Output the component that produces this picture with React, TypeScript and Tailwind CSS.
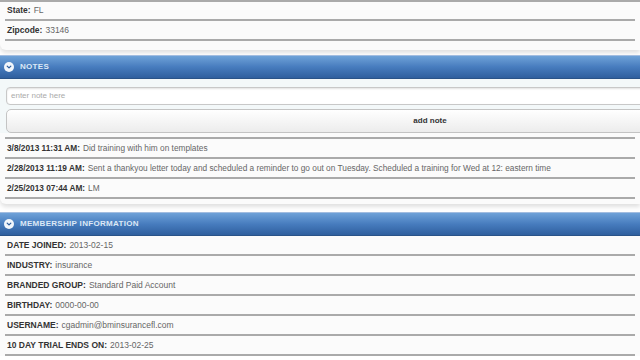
import React from "react";

const font = "font-['Liberation_Sans',Arial,sans-serif]";

function Row({ label, value }: { label: string; value: string }) {
  return (
    <div className="h-[20px] flex items-center pl-[2px] border-b-2 border-[#aaaaaa] text-[8.5px] leading-none whitespace-nowrap">
      <span className="font-bold text-[#333]">{label}:</span>
      <span className="ml-[3px] text-[#666]">{value}</span>
    </div>
  );
}

function Header({ title }: { title: string }) {
  return (
    <div className="h-[24px] flex items-center pl-[4px] border-t border-[#a3bde0] border-b border-b-[#2a5388] bg-gradient-to-b from-[#6fa2d8] via-[#477cbe] to-[#2f5f9e]">
      <span className="w-[10px] h-[10px] rounded-full bg-[#f2f6fb] flex items-center justify-center">
        <svg width="6" height="6" viewBox="0 0 10 10">
          <path d="M2 3.5 L5 6.5 L8 3.5" fill="none" stroke="#2f5f9e" strokeWidth="2.2" strokeLinecap="round" strokeLinejoin="round" />
        </svg>
      </span>
      <span className="ml-[6px] text-[8px] font-bold tracking-[0.3px] text-[#dce8f6] uppercase">{title}</span>
    </div>
  );
}

export default function App() {
  const notes = [
    { when: "3/8/2013 11:31 AM", text: "Did training with him on templates" },
    {
      when: "2/28/2013 11:19 AM",
      text: "Sent a thankyou letter today and scheduled a reminder to go out on Tuesday. Scheduled a training for Wed at 12: eastern time",
    },
    { when: "2/25/2013 07:44 AM", text: "LM" },
  ];

  const membership = [
    ["DATE JOINED", "2013-02-15"],
    ["INDUSTRY", "insurance"],
    ["BRANDED GROUP", "Standard Paid Account"],
    ["BIRTHDAY", "0000-00-00"],
    ["USERNAME", "cgadmin@bminsurancefl.com"],
    ["10 DAY TRIAL ENDS ON", "2013-02-25"],
  ];

  return (
    <div className={`w-[640px] h-[360px] overflow-hidden bg-white ${font}`}>
      {/* Address panel (tail end) */}
      <div className="bg-[#fbfbfb] border-t-2 border-[#aaaaaa] rounded-bl-[6px] shadow-[0_3px_4px_rgba(0,0,0,0.12)] pb-[9px]">
        <div className="px-[5px] -mt-[1px]">
          <Row label="State" value="FL" />
          <Row label="Zipcode" value="33146" />
        </div>
      </div>

      {/* Notes */}
      <div className="mt-[5px]">
        <Header title="Notes" />
        <div className="bg-[#f3f8f9] pt-[8px] px-[6px]">
          <div className="w-[848px] h-[18px] rounded-[4px] border border-[#c8c8c8] bg-white shadow-[inset_0_1px_2px_rgba(0,0,0,0.12)] flex items-center pl-[4px]">
            <span className="text-[8px] text-[#aaa]">enter note here</span>
          </div>
          <div className="mt-[4px] w-[848px] h-[24px] rounded-[5px] border border-[#c4c4c4] bg-gradient-to-b from-white to-[#ececec] flex items-center justify-center">
            <span className="text-[8px] font-bold text-[#333]">add note</span>
          </div>
        </div>
        <div className="bg-[#fbfbfb] px-[5px] pt-[4px] pb-[5px] rounded-bl-[6px] shadow-[0_3px_4px_rgba(0,0,0,0.12)]">
          <div className="border-t-2 border-[#aaaaaa]">
            {notes.map((n) => (
              <div key={n.when} className="h-[20px] flex items-center pl-[2px] border-b-2 border-[#aaaaaa] text-[8.3px] leading-none whitespace-nowrap">
                <span className="font-bold text-[#333]">{n.when}:</span>
                <span className="ml-[3px] text-[#666]">{n.text}</span>
              </div>
            ))}
          </div>
        </div>
      </div>

      {/* Membership */}
      <div className="mt-[8px]">
        <Header title="Membership Information" />
        <div className="bg-[#fbfbfb] px-[5px]">
          {membership.map(([l, v]) => (
            <Row key={l} label={l} value={v} />
          ))}
        </div>
      </div>
    </div>
  );
}
